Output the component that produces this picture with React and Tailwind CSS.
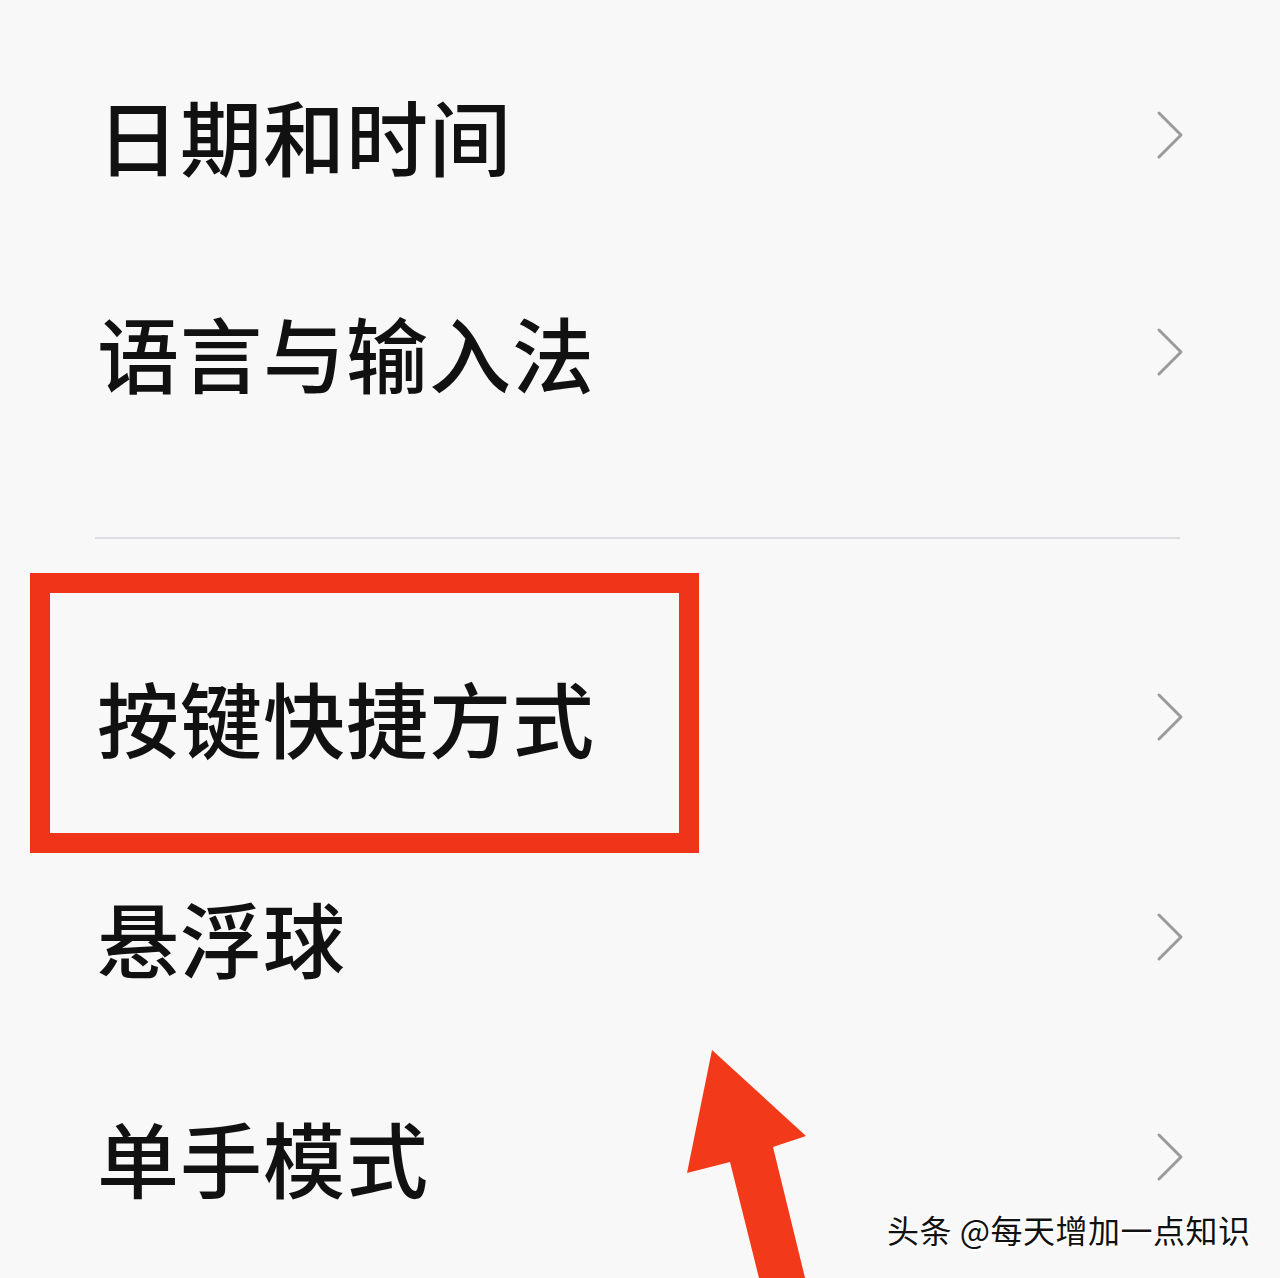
import React from 'react';

const Chevron = () => (
  <svg width="30" height="50" viewBox="0 0 30 50" className="shrink-0 translate-x-[2px]">
    <path d="M4 3 L26 25 L4 47" fill="none" stroke="#9a9a9a" strokeWidth="3" strokeLinecap="round" strokeLinejoin="round" />
  </svg>
);

function Row({ label, children, className = '' }) {
  return (
    <div className={`relative flex items-center justify-between h-[220px] pl-[97px] pr-[97px] pb-[10px] ${className}`}>
      {children}
      <span className="relative text-[82px] leading-none font-medium text-[#111] tracking-[1px]" style={{ fontFamily: '"Noto Sans CJK SC", "Noto Sans", sans-serif' }}>
        {label}
      </span>
      <Chevron />
    </div>
  );
}

export default function App() {
  return (
    <div className="relative w-[1280px] h-[1278px] overflow-hidden bg-[#f8f8f9]">
      <div className="flex flex-col pt-[30px]">
        <Row label="日期和时间" />
        <Row label="语言与输入法" className="-mt-[3px]" />
        <div className="h-[70px]" />
        <div className="mx-[95px] mr-[100px] h-[2px] bg-[#dcdce0]" />
        <div className="h-[73px]" />
        <Row label="按键快捷方式">
          <div className="absolute left-[30px] top-[-39px] w-[669px] h-[280px] border-[20px] border-[#f03419]" />
        </Row>
        <Row label="悬浮球" />
        <Row label="单手模式" />
      </div>

      {/* annotation arrow */}
      <svg className="absolute left-0 top-0" width="1280" height="1278" viewBox="0 0 1280 1278">
        <polygon
          points="712,1050 806,1136 773,1147 808,1290 762,1290 730,1162 687,1173"
          fill="#f23a1a"
        />
      </svg>

      {/* watermark */}
      <div
        className="absolute left-[887px] top-[1213px] text-[32px] leading-none text-[#111] tracking-[0.5px]"
        style={{ fontFamily: '"Noto Sans CJK SC", "Noto Sans", sans-serif', textShadow: '2px 2px 0 #fff, -1px -1px 0 #fff, 1px -1px 0 #fff, -1px 1px 0 #fff' }}
      >
        头条 @每天增加一点知识
      </div>
    </div>
  );
}
